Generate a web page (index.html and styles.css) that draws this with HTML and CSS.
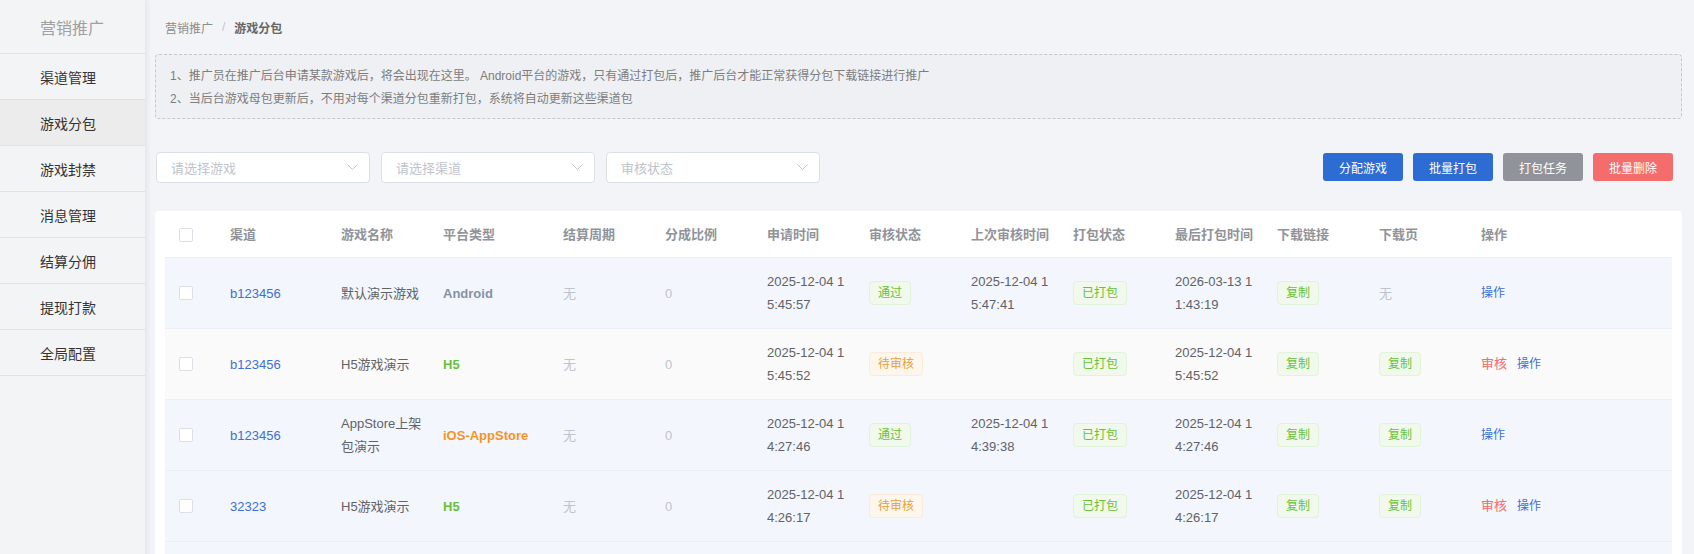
FILE: index.html
```html
<!DOCTYPE html>
<html lang="zh-CN">
<head>
<meta charset="utf-8">
<title>游戏分包</title>
<link rel="stylesheet" href="styles.css">
</head>
<body>
<div class="layout">
  <aside class="sidebar">
    <div class="side-title">营销推广</div>
    <div class="side-item">渠道管理</div>
    <div class="side-item active">游戏分包</div>
    <div class="side-item">游戏封禁</div>
    <div class="side-item">消息管理</div>
    <div class="side-item">结算分佣</div>
    <div class="side-item">提现打款</div>
    <div class="side-item">全局配置</div>
  </aside>
  <main class="main">
    <div class="breadcrumb">
      <span class="crumb">营销推广</span>
      <span class="sep">/</span>
      <span class="crumb current">游戏分包</span>
    </div>
    <div class="alert">
      <p>1、推广员在推广后台申请某款游戏后，将会出现在这里。 Android平台的游戏，只有通过打包后，推广后台才能正常获得分包下载链接进行推广</p>
      <p>2、当后台游戏母包更新后，不用对每个渠道分包重新打包，系统将自动更新这些渠道包</p>
    </div>
    <div class="toolbar">
      <div class="filters">
        <div class="select"><span>请选择游戏</span><svg class="chev" width="11" height="6" viewBox="0 0 11 6"><polyline points="0.5,0.5 5.5,5.5 10.5,0.5" fill="none" stroke="#c0c4cc" stroke-width="1"/></svg></div>
        <div class="select"><span>请选择渠道</span><svg class="chev" width="11" height="6" viewBox="0 0 11 6"><polyline points="0.5,0.5 5.5,5.5 10.5,0.5" fill="none" stroke="#c0c4cc" stroke-width="1"/></svg></div>
        <div class="select"><span>审核状态</span><svg class="chev" width="11" height="6" viewBox="0 0 11 6"><polyline points="0.5,0.5 5.5,5.5 10.5,0.5" fill="none" stroke="#c0c4cc" stroke-width="1"/></svg></div>
      </div>
      <div class="buttons">
        <button class="btn blue">分配游戏</button>
        <button class="btn blue">批量打包</button>
        <button class="btn grey">打包任务</button>
        <button class="btn red">批量删除</button>
      </div>
    </div>
    <div class="card">
      <table class="grid">
        <colgroup>
          <col class="c-check"><col class="c-chan"><col class="c-std"><col class="c-plat">
          <col class="c-std"><col class="c-std"><col class="c-std"><col class="c-std"><col class="c-std">
          <col class="c-std"><col class="c-std"><col class="c-std"><col class="c-std"><col>
        </colgroup>
        <thead>
          <tr>
            <th class="chk"><span class="checkbox"></span></th>
            <th>渠道</th><th>游戏名称</th><th>平台类型</th><th>结算周期</th><th>分成比例</th>
            <th>申请时间</th><th>审核状态</th><th>上次审核时间</th><th>打包状态</th><th>最后打包时间</th>
            <th>下载链接</th><th>下载页</th><th>操作</th>
          </tr>
        </thead>
        <tbody>
          <tr class="hl">
            <td class="chk"><span class="checkbox"></span></td>
            <td class="link">b123456</td>
            <td>默认演示游戏</td>
            <td class="plat android">Android</td>
            <td class="muted">无</td>
            <td class="muted">0</td>
            <td>2025-12-04 15:45:57</td>
            <td><span class="tag green">通过</span></td>
            <td>2025-12-04 15:47:41</td>
            <td><span class="tag green">已打包</span></td>
            <td>2026-03-13 11:43:19</td>
            <td><span class="tag green">复制</span></td>
            <td class="muted">无</td>
            <td><a class="op">操作</a></td>
          </tr>
          <tr class="stripe">
            <td class="chk"><span class="checkbox"></span></td>
            <td class="link">b123456</td>
            <td>H5游戏演示</td>
            <td class="plat h5">H5</td>
            <td class="muted">无</td>
            <td class="muted">0</td>
            <td>2025-12-04 15:45:52</td>
            <td><span class="tag orange">待审核</span></td>
            <td></td>
            <td><span class="tag green">已打包</span></td>
            <td>2025-12-04 15:45:52</td>
            <td><span class="tag green">复制</span></td>
            <td><span class="tag green">复制</span></td>
            <td><a class="audit">审核</a><a class="op gap">操作</a></td>
          </tr>
          <tr class="hl">
            <td class="chk"><span class="checkbox"></span></td>
            <td class="link">b123456</td>
            <td>AppStore上架包演示</td>
            <td class="plat ios">iOS-AppStore</td>
            <td class="muted">无</td>
            <td class="muted">0</td>
            <td>2025-12-04 14:27:46</td>
            <td><span class="tag green">通过</span></td>
            <td>2025-12-04 14:39:38</td>
            <td><span class="tag green">已打包</span></td>
            <td>2025-12-04 14:27:46</td>
            <td><span class="tag green">复制</span></td>
            <td><span class="tag green">复制</span></td>
            <td><a class="op">操作</a></td>
          </tr>
          <tr class="hl">
            <td class="chk"><span class="checkbox"></span></td>
            <td class="link">32323</td>
            <td>H5游戏演示</td>
            <td class="plat h5">H5</td>
            <td class="muted">无</td>
            <td class="muted">0</td>
            <td>2025-12-04 14:26:17</td>
            <td><span class="tag orange">待审核</span></td>
            <td></td>
            <td><span class="tag green">已打包</span></td>
            <td>2025-12-04 14:26:17</td>
            <td><span class="tag green">复制</span></td>
            <td><span class="tag green">复制</span></td>
            <td><a class="audit">审核</a><a class="op gap">操作</a></td>
          </tr>
          <tr class="hl filler">
            <td></td><td></td><td></td><td></td><td></td><td></td><td></td>
            <td></td><td></td><td></td><td></td><td></td><td></td><td></td>
          </tr>
        </tbody>
      </table>
    </div>
  </main>
</div>
</body>
</html>
```
FILE: styles.css
```css
* { box-sizing: border-box; }
html, body { margin: 0; padding: 0; }
body {
  font-family: "Liberation Sans", "Noto Sans CJK SC", sans-serif;
  background: #f3f4f7;
  color: #606266;
  overflow: hidden;
}
.layout {
  display: flex;
  min-height: 100vh;
}
.sidebar {
  width: 145px;
  flex: 0 0 145px;
  background: #f3f4f6;
  box-shadow: 2px 0 5px rgba(0, 0, 0, 0.07);
  position: relative;
  z-index: 1;
}
.side-title {
  height: 54px;
  padding-left: 40px;
  display: flex;
  align-items: center;
  font-size: 16px;
  color: #a0a0a0;
  border-bottom: 1px solid #e1e2e6;
}
.side-item {
  height: 46px;
  padding-left: 40px;
  display: flex;
  align-items: center;
  font-size: 14px;
  color: #333;
  border-bottom: 1px solid #e1e2e6;
}
.side-item.active { background: #ececed; }

.main {
  flex: 1;
  min-width: 0;
  padding: 0 12px 0 10px;
}
.breadcrumb {
  height: 54px;
  display: flex;
  align-items: center;
  padding-left: 10px;
  font-size: 12px;
}
.crumb { color: #8c8c8c; }
.crumb.current { color: #666; font-weight: bold; }
.sep { color: #c0c4cc; margin: 0 9px; }

.alert {
  background: #eef0f4;
  border: 1px dashed #c6c8ce;
  border-radius: 4px;
  padding: 10px 14px 7px;
  font-size: 12px;
  line-height: 23px;
  color: #7d7d7d;
}
.alert p { margin: 0; }

.toolbar {
  margin-top: 32px;
  margin-bottom: 28px;
  height: 32px;
  display: flex;
  align-items: center;
  justify-content: space-between;
}
.filters { display: flex; gap: 11px; padding-left: 1px; }
.select {
  width: 214px;
  height: 31px;
  background: #fff;
  border: 1px solid #dcdfe6;
  border-radius: 4px;
  display: flex;
  align-items: center;
  justify-content: space-between;
  padding: 0 11px 0 14px;
  font-size: 13px;
  color: #c0c4cc;
}
.chev { display: block; }
.buttons { display: flex; gap: 10px; margin-right: 9px; }
.btn {
  width: 80px;
  height: 28px;
  border: none;
  border-radius: 3px;
  color: #fff;
  font-family: inherit;
  font-size: 12px;
  padding: 0;
}
.btn.blue { background: #2d6cd2; }
.btn.grey { background: #909399; }
.btn.red { background: #f56c6c; }

.card {
  background: #fff;
  border-radius: 4px;
  padding: 0 10px;
}
.grid {
  width: 100%;
  table-layout: fixed;
  border-collapse: collapse;
  font-size: 13px;
}
.c-check { width: 53px; }
.c-chan { width: 111px; }
.c-std { width: 102px; }
.c-plat { width: 120px; }
.grid th {
  text-align: left;
  color: #909399;
  font-weight: bold;
  line-height: 23px;
  padding: 12px 8px 11px 12px;
  border-bottom: 1px solid #ebeef5;
  background: #fff;
}
.grid td {
  line-height: 23px;
  padding: 12px 8px 12px 12px;
  vertical-align: middle;
  word-break: break-all;
  border-bottom: 1px solid #ebeef5;
  color: #606266;
}
.grid tr.filler td { height: 71px; }
.grid .chk { padding-left: 14px; }
.grid tr.hl td { background: #f3f6fd; }
.grid tr.stripe td { background: #fafafa; }
.checkbox {
  display: block;
  width: 14px;
  height: 14px;
  border: 1px solid #dcdfe6;
  border-radius: 2px;
  background: #fff;
}
.grid td.link { color: #3e6fd6; }
.grid td.muted { color: #c0c4cc; }
.grid td.plat { font-weight: bold; }
.grid td.android { color: #8492a6; }
.grid td.h5 { color: #67c23a; }
.grid td.ios { color: #f7931e; }
.tag {
  display: inline-block;
  height: 24px;
  line-height: 22px;
  padding: 0 8px;
  font-size: 12px;
  border-radius: 4px;
  border: 1px solid transparent;
  vertical-align: middle;
}
.tag.green { background: #f0f9eb; border-color: #e1f3d8; color: #67c23a; }
.tag.orange { background: #fdf6ec; border-color: #faecd8; color: #e6a23c; }
.op { color: #3e6fd6; font-size: 12px; cursor: pointer; }
.op.gap { margin-left: 10px; }
.audit { color: #f56c6c; font-size: 13px; cursor: pointer; }
```
